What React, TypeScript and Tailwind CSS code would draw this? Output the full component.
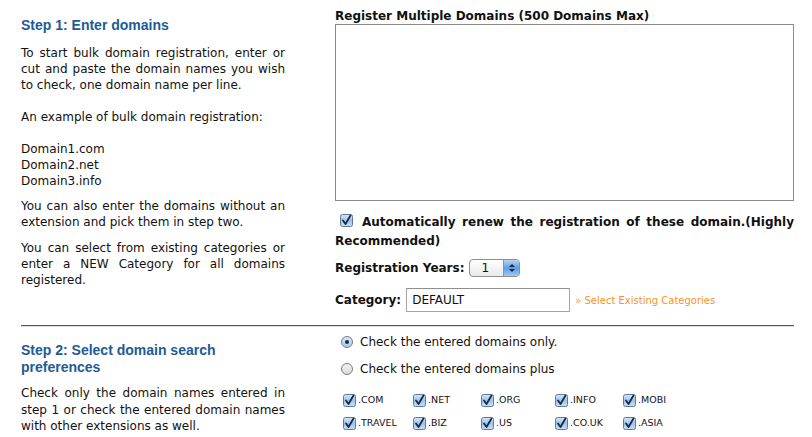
import React from 'react';

const tlds = [
    ['.COM', '.NET', '.ORG', '.INFO', '.MOBI'],
    ['.TRAVEL', '.BIZ', '.US', '.CO.UK', '.ASIA'],
];

function AquaCheck({ className = '' }: { className?: string }) {
    return (
        <svg width="13" height="13" viewBox="0 0 13 13" className={`shrink-0 ${className}`}>
            <defs>
                <linearGradient id="cbg" x1="0" y1="0" x2="0" y2="1">
                    <stop offset="0" stopColor="#d6e7f8" />
                    <stop offset="0.5" stopColor="#9cc4ec" />
                    <stop offset="1" stopColor="#c9e1f7" />
                </linearGradient>
            </defs>
            <rect x="0.5" y="0.5" width="12" height="12" rx="2" fill="url(#cbg)" stroke="#5f7b98" />
            <path d="M3 6.5 L5.5 10 L10.5 1.5" fill="none" stroke="#1b2a44" strokeWidth="1.8" strokeLinecap="round" strokeLinejoin="round" />
        </svg>
    );
}

function AquaRadio({ checked }: { checked?: boolean }) {
    return (
        <svg width="12" height="12" viewBox="0 0 12 12" className="shrink-0">
            <defs>
                <linearGradient id="rbg" x1="0" y1="0" x2="0" y2="1">
                    <stop offset="0" stopColor="#f4f4f4" />
                    <stop offset="1" stopColor="#d8d8d8" />
                </linearGradient>
                <linearGradient id="rbgOn" x1="0" y1="0" x2="0" y2="1">
                    <stop offset="0" stopColor="#dbe9f7" />
                    <stop offset="1" stopColor="#a9c9ea" />
                </linearGradient>
            </defs>
            <circle cx="6" cy="6" r="5.5" fill={checked ? 'url(#rbgOn)' : 'url(#rbg)'} stroke="#7d7d7d" />
            {checked && <circle cx="6" cy="6" r="2" fill="#1b2a44" />}
        </svg>
    );
}

export default function App() {
    return (
        <div className="w-[812px] h-[437px] overflow-hidden bg-white pt-[1px] text-[12px] text-[#111] font-['DejaVu_Sans',Verdana,sans-serif]">
            {/* Step 1 */}
            <div className="flex pl-[21px] pr-[18px]">
                <div className="w-[264px] shrink-0">
                    <h2 className="mt-[15px] text-[14px] leading-[18px] font-bold text-[#1d5b95] font-['Liberation_Sans',Arial,sans-serif]">
                        Step 1: Enter domains
                    </h2>
                    <p className="mt-[11px] leading-[16px] text-justify">
                        To start bulk domain registration, enter or cut and paste the domain names you wish to check, one domain name per line.
                    </p>
                    <p className="mt-[16px] leading-[16px]">An example of bulk domain registration:</p>
                    <p className="mt-[16px] leading-[16px]">
                        Domain1.com<br />Domain2.net<br />Domain3.info
                    </p>
                    <p className="mt-[9px] leading-[16px] text-justify">
                        You can also enter the domains without an extension and pick them in step two.
                    </p>
                    <p className="mt-[10px] leading-[16px] text-justify">
                        You can select from existing categories or enter a NEW Category for all domains registered.
                    </p>
                </div>

                <div className="ml-[50px] flex-1">
                    <h3 className="mt-[7px] leading-[16px] font-bold">Register Multiple Domains (500 Domains Max)</h3>
                    <textarea className="block w-full h-[177px] border border-[#8a8a8a] resize-none outline-none" />

                    <p className="mt-[12px] leading-[19px] font-bold text-justify">
                        <AquaCheck className="inline-block align-[-1px] ml-[5px] mr-[9px]" />
                        Automatically renew the registration of these domain.(Highly Recommended)
                    </p>

                    <div className="mt-[8px] flex items-center h-[18px]">
                        <span className="font-bold">Registration Years:</span>
                        <div className="ml-[5px] flex w-[51px] h-[18px] rounded-[4px] border border-[#8e8e8e] overflow-hidden bg-gradient-to-b from-white to-[#e9e9e9]">
                            <span className="flex-1 pl-[11px] leading-[16px] text-[12px]">1</span>
                            <span className="w-[16px] flex flex-col items-center justify-center gap-[2px] bg-gradient-to-b from-[#b9d6f3] via-[#5d9ee2] to-[#9ccaf4] border-l border-[#7b98b8]">
                                <svg width="6" height="3" viewBox="0 0 6 3"><path d="M0 3 L3 0 L6 3 Z" fill="#1a2a44" /></svg>
                                <svg width="6" height="3" viewBox="0 0 6 3"><path d="M0 0 L3 3 L6 0 Z" fill="#1a2a44" /></svg>
                            </span>
                        </div>
                    </div>

                    <div className="mt-[11px] flex items-center">
                        <span className="font-bold">Category:</span>
                        <div className="ml-[5px] w-[164px] h-[24px] border border-[#a5a5a5] border-t-[#8f8f8f] pl-[5px] leading-[22px] text-[12px]">
                            DEFAULT
                        </div>
                        <a className="ml-[5px] text-[10px] text-[#f7941d]">» Select Existing Categories</a>
                    </div>
                </div>
            </div>

            {/* Divider */}
            <div className="ml-[21px] mr-[18px] mt-[13px] h-[2px] border-t border-[#5a5a5a] border-b border-b-[#dcdcdc]" />

            {/* Step 2 */}
            <div className="flex pl-[21px] pr-[18px]">
                <div className="w-[264px] shrink-0">
                    <h2 className="mt-[15px] text-[14px] leading-[17px] font-bold text-[#1d5b95] font-['Liberation_Sans',Arial,sans-serif]">
                        Step 2: Select domain search preferences
                    </h2>
                    <p className="mt-[9px] leading-[16.5px] text-justify">
                        Check only the domain names entered in step 1 or check the entered domain names with other extensions as well.
                    </p>
                </div>

                <div className="ml-[50px] flex-1">
                    <label className="mt-[7px] flex items-center h-[16px] pl-[6px] gap-[7px]">
                        <AquaRadio checked />
                        <span>Check the entered domains only.</span>
                    </label>
                    <label className="mt-[11px] flex items-center h-[16px] pl-[6px] gap-[7px]">
                        <AquaRadio />
                        <span>Check the entered domains plus</span>
                    </label>

                    <div className="mt-[15px] ml-[8px] grid grid-cols-[70px_68px_74px_68px_auto] gap-y-[7px]">
                        {tlds.flat().map((t) => (
                            <div key={t} className="flex items-center h-[16px] gap-[2px]">
                                <AquaCheck />
                                <span className="text-[9.5px]">{t}</span>
                            </div>
                        ))}
                    </div>
                </div>
            </div>
        </div>
    );
}
